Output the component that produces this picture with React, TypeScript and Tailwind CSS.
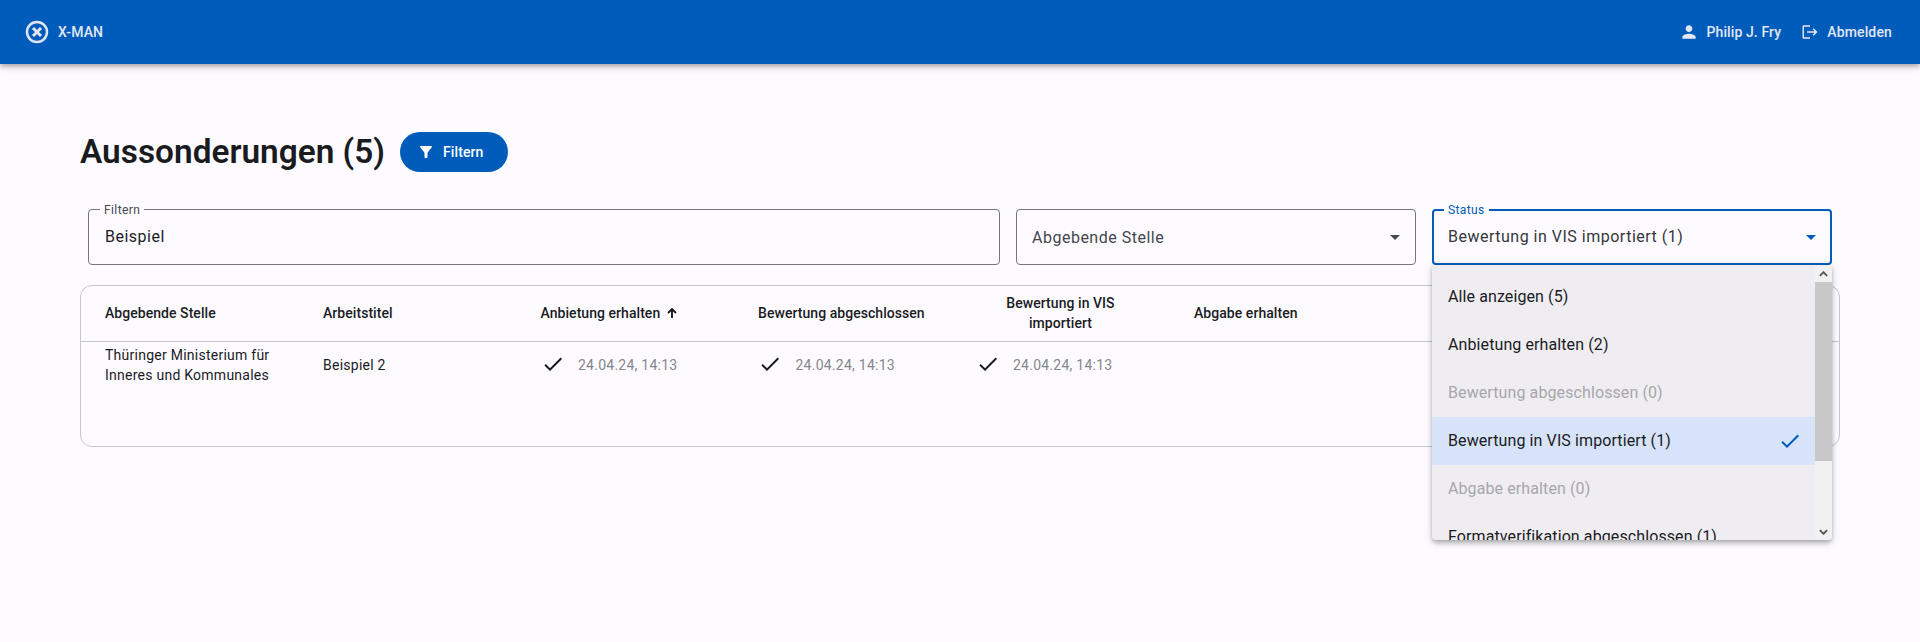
const P = {
  person: "M12 12c2.21 0 4-1.79 4-4s-1.79-4-4-4-4 1.79-4 4 1.79 4 4 4zm0 2c-2.67 0-8 1.34-8 4v2h16v-2c0-2.66-5.33-4-8-4z",
  logout: "M17 7l-1.41 1.41L18.17 11H8v2h10.17l-2.58 2.58L17 17l5-5zM4 5h8V3H4c-1.1 0-2 .9-2 2v14c0 1.1.9 2 2 2h8v-2H4V5z",
  filter: "M4.25 5.61C6.27 8.2 10 13 10 13v6c0 .55.45 1 1 1h2c.55 0 1-.45 1-1v-6s3.72-4.8 5.74-7.39c.51-.66.04-1.61-.79-1.61H5.04c-.83 0-1.3.95-.79 1.61z",
  check: "M9 16.17L4.83 12l-1.42 1.41L9 19 21 7l-1.41-1.41z",
};

function Icon({ d, className }: { d: string; className: string }) {
  return (
    <svg viewBox="0 0 24 24" fill="currentColor" className={className}>
      <path d={d} />
    </svg>
  );
}

function Caret({ className }: { className: string }) {
  return <div className={`w-0 h-0 border-x-[5px] border-x-transparent border-t-[5px] ${className}`} />;
}

function DateCell() {
  return (
    <div className="w-[217.5px] shrink-0 pl-4 pt-[10px] flex items-start">
      <Icon d={P.check} className="w-6 h-6 text-[#1a1b1f]" />
      <span className="ml-[13.5px] mt-[3px] text-[14px] leading-5 tracking-[0.25px] text-[#85878c]">24.04.24, 14:13</span>
    </div>
  );
}

const items: { t: string; dis?: boolean; sel?: boolean }[] = [
  { t: "Alle anzeigen (5)" },
  { t: "Anbietung erhalten (2)" },
  { t: "Bewertung abgeschlossen (0)", dis: true },
  { t: "Bewertung in VIS importiert (1)", sel: true },
  { t: "Abgabe erhalten (0)", dis: true },
  { t: "Formatverifikation abgeschlossen (1)" },
];

export default function App() {
  return (
    <div className="min-h-screen bg-[#fdfbff] text-[#1a1b1f] overflow-hidden font-['Roboto',sans-serif]">
      <header className="relative z-10 h-16 bg-[#005cbb] text-[#e3e7f5] flex items-center pl-6 pr-[28px] text-[14px] font-medium shadow-[0_2px_4px_-1px_rgba(0,0,0,0.2),0_4px_5px_0_rgba(0,0,0,0.14),0_1px_10px_0_rgba(0,0,0,0.12)]">
        <svg viewBox="0 0 24 24" className="w-6 h-6 ml-px" fill="none" stroke="currentColor">
          <circle cx="12" cy="12" r="10" strokeWidth="2.4" />
          <path d="M8 8l8 8M16 8l-8 8" strokeWidth="3" />
        </svg>
        <span className="ml-[9px] tracking-[0.1px]">X-MAN</span>
        <div className="ml-auto flex items-center">
          <Icon d={P.person} className="w-5 h-5" />
          <span className="ml-2 tracking-[0.1px]">Philip J. Fry</span>
          <Icon d={P.logout} className="w-[18px] h-[18px] ml-[20px]" />
          <span className="ml-[8px] tracking-[0.15px]">Abmelden</span>
        </div>
      </header>

      <main className="px-20 pt-[68px] relative">
        <div className="flex items-center h-10">
          <h1 className="text-[33.4px] leading-10 font-semibold tracking-normal">Aussonderungen (5)</h1>
          <button className="ml-[15px] h-10 w-[108px] rounded-full bg-[#005cbb] text-white flex items-center pl-[17px] text-[14px] font-medium tracking-[0.1px]">
            <Icon d={P.filter} className="w-[18px] h-[18px]" />
            <span className="ml-2">Filtern</span>
          </button>
        </div>

        <div className="flex gap-4 px-2 mt-[37px] h-14">
          <div className="relative flex-1 h-14 border border-[#74777f] rounded flex items-center px-4">
            <span className="absolute -top-[8px] left-[11px] bg-[#fdfbff] px-1 text-[12px] leading-4 tracking-[0.4px] text-[#44474e]">Filtern</span>
            <span className="text-[16px] tracking-[0.5px]">Beispiel</span>
          </div>
          <div className="relative w-[400px] h-14 border border-[#74777f] rounded flex items-center justify-between pl-[15px] pr-[15px]">
            <span className="text-[16px] tracking-[0.5px] text-[#44474e] mt-0.5">Abgebende Stelle</span>
            <Caret className="border-t-[#44474e]" />
          </div>
          <div className="relative w-[400px] h-14 border-2 border-[#005cbb] rounded flex items-center justify-between pl-[14px] pr-[14px]">
            <span className="absolute -top-[9px] left-[10px] bg-[#fdfbff] px-1 text-[12px] leading-4 tracking-[0.4px] text-[#005cbb]">Status</span>
            <span className="text-[16px] tracking-[0.5px] text-[#35373c]">Bewertung in VIS importiert (1)</span>
            <Caret className="border-t-[#005cbb]" />
          </div>
        </div>

        <div className="mt-[20px] h-[162px] border border-[#c4c6d0] rounded-xl">
          <div className="flex h-14 border-b border-[#c4c6d0] text-[14px] leading-5 font-medium tracking-[0.05px] items-center">
            <div className="w-[226px] shrink-0 pl-6 -mt-0.5">Abgebende Stelle</div>
            <div className="w-[217.5px] shrink-0 pl-4 -mt-0.5">Arbeitstitel</div>
            <div className="w-[217.5px] shrink-0 pl-4 flex items-center -mt-0.5">
              Anbietung erhalten
              <svg viewBox="0 0 10 10" className="w-[10px] h-[10px] ml-[7px]" fill="none" stroke="currentColor" strokeWidth="1.9">
                <path d="M5 10V1.5M1 5l4-4 4 4" />
              </svg>
            </div>
            <div className="w-[217.5px] shrink-0 pl-4 -mt-0.5">Bewertung abgeschlossen</div>
            <div className="w-[217.5px] shrink-0 pl-4 -mt-0.5">
              <div className="w-[170px] text-center">Bewertung in VIS<br />importiert</div>
            </div>
            <div className="w-[217.5px] shrink-0 pl-[17px] -mt-0.5">Abgabe erhalten</div>
          </div>
          <div className="flex text-[14px] leading-5 tracking-[0.25px]">
            <div className="w-[226px] shrink-0 pl-6 pt-[3px]">Thüringer Ministerium für<br />Inneres und Kommunales</div>
            <div className="w-[217.5px] shrink-0 pl-4 pt-[13px]">Beispiel 2</div>
            <DateCell />
            <DateCell />
            <DateCell />
          </div>
        </div>

        <div className="absolute z-20 left-[1432px] top-[201px] w-[400px] h-[275px] bg-[#efedf1] rounded-b shadow-[0_2px_4px_-1px_rgba(0,0,0,0.2),0_4px_5px_0_rgba(0,0,0,0.14),0_1px_10px_0_rgba(0,0,0,0.12)] overflow-hidden flex">
          <div className="flex-1 pt-2 overflow-hidden">
            {items.map((it) => (
              <div
                key={it.t}
                className={`h-12 shrink-0 flex items-center justify-between pl-[16px] pr-[13px] text-[16px] tracking-[0.1px] ${it.sel ? "bg-[#d7e3f9]" : ""} ${it.dis ? "text-[#a7a7ab]" : ""}`}
              >
                <span>{it.t}</span>
                {it.sel && <Icon d={P.check} className="w-6 h-6 text-[#005cbb]" />}
              </div>
            ))}
          </div>
          <div className="w-[17px] bg-[#f1f1f1] flex flex-col">
            <div className="h-[17px] flex items-center justify-center">
              <svg viewBox="0 0 10 6" className="w-[9px] h-[6px]" fill="none" stroke="#505050" strokeWidth="2"><path d="M1 5l4-4 4 4" /></svg>
            </div>
            <div className="h-[179px] bg-[#c8c8c8]" />
            <div className="mt-auto h-[17px] flex items-center justify-center">
              <svg viewBox="0 0 10 6" className="w-[9px] h-[6px]" fill="none" stroke="#505050" strokeWidth="2"><path d="M1 1l4 4 4-4" /></svg>
            </div>
          </div>
        </div>
      </main>
    </div>
  );
}
